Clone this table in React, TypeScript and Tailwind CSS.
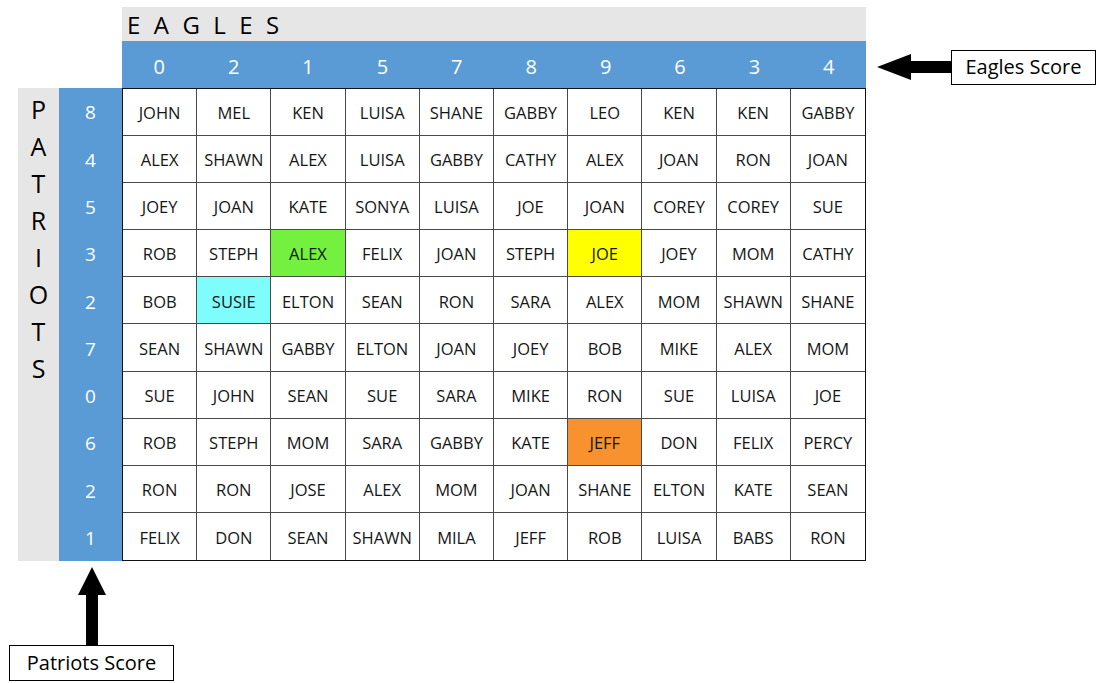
const eaglesScores = [0, 2, 1, 5, 7, 8, 9, 6, 3, 4];
const patriotsScores = [8, 4, 5, 3, 2, 7, 0, 6, 2, 1];

const names = [
  ['JOHN', 'MEL', 'KEN', 'LUISA', 'SHANE', 'GABBY', 'LEO', 'KEN', 'KEN', 'GABBY'],
  ['ALEX', 'SHAWN', 'ALEX', 'LUISA', 'GABBY', 'CATHY', 'ALEX', 'JOAN', 'RON', 'JOAN'],
  ['JOEY', 'JOAN', 'KATE', 'SONYA', 'LUISA', 'JOE', 'JOAN', 'COREY', 'COREY', 'SUE'],
  ['ROB', 'STEPH', 'ALEX', 'FELIX', 'JOAN', 'STEPH', 'JOE', 'JOEY', 'MOM', 'CATHY'],
  ['BOB', 'SUSIE', 'ELTON', 'SEAN', 'RON', 'SARA', 'ALEX', 'MOM', 'SHAWN', 'SHANE'],
  ['SEAN', 'SHAWN', 'GABBY', 'ELTON', 'JOAN', 'JOEY', 'BOB', 'MIKE', 'ALEX', 'MOM'],
  ['SUE', 'JOHN', 'SEAN', 'SUE', 'SARA', 'MIKE', 'RON', 'SUE', 'LUISA', 'JOE'],
  ['ROB', 'STEPH', 'MOM', 'SARA', 'GABBY', 'KATE', 'JEFF', 'DON', 'FELIX', 'PERCY'],
  ['RON', 'RON', 'JOSE', 'ALEX', 'MOM', 'JOAN', 'SHANE', 'ELTON', 'KATE', 'SEAN'],
  ['FELIX', 'DON', 'SEAN', 'SHAWN', 'MILA', 'JEFF', 'ROB', 'LUISA', 'BABS', 'RON'],
];

// highlighted squares, keyed "row-col"
const highlights: Record<string, string> = {
  '3-2': 'bg-[#74f03e]',
  '3-6': 'bg-[#ffff00]',
  '4-1': 'bg-[#7ffcfc]',
  '7-6': 'bg-[#f7922f]',
};

const font = { fontFamily: '"Open Sans", "Noto Sans", sans-serif' };

function LeftArrow() {
  return (
    <svg width="74" height="28" viewBox="0 0 74 28">
      <polygon points="0,14 34,1 34,8 74,8 74,20 34,20 34,27" fill="#000" />
    </svg>
  );
}

function UpArrow() {
  return (
    <svg width="30" height="78" viewBox="0 0 30 78">
      <polygon points="15,0 29,28 21,28 21,78 9,78 9,28 1,28" fill="#000" />
    </svg>
  );
}

export default function App() {
  return (
    <div className="h-[683px] w-[1101px] overflow-hidden bg-white pt-[7px] text-[#161616]" style={font}>
      {/* Eagles title bar */}
      <div className="ml-[122px] flex h-[34px] w-[744px] items-center bg-[#e6e6e6] pl-[5px] pt-[2px] text-[24px] leading-none tracking-[0.56em] text-black">
        EAGLES
      </div>

      {/* Eagles score row */}
      <div className="flex h-[47px] items-center">
        <div className="w-[122px]" />
        <div className="grid h-full w-[744px] grid-cols-10 bg-[#5b9bd5] pt-[4px] text-[20px] text-white">
          {eaglesScores.map((n, i) => (
            <div key={i} className="flex items-center justify-center">
              {n}
            </div>
          ))}
        </div>
        <div className="ml-[11px] mt-[5px] flex items-center">
          <LeftArrow />
          <div className="flex h-[35px] w-[145px] items-center justify-center border-[1.5px] border-black text-[20px] text-black">
            Eagles Score
          </div>
        </div>
      </div>

      {/* main board */}
      <div className="ml-[18px] flex h-[473px]">
        <div className="flex w-[41px] flex-col items-center bg-[#e6e6e6] pt-[3px] text-[25px] leading-[37px] text-black">
          {'PATRIOTS'.split('').map((c, i) => (
            <span key={i}>{c}</span>
          ))}
        </div>
        <div className="grid w-[63px] grid-rows-10 bg-[#5b9bd5] text-[19px] text-white">
          {patriotsScores.map((n, i) => (
            <div key={i} className="flex items-center justify-center pt-[2px]">
              {n}
            </div>
          ))}
        </div>
        <div className="grid w-[744px] grid-cols-10 grid-rows-10 border-[1.5px] border-[#111] text-[16.5px]">
          {names.map((row, r) =>
            row.map((name, c) => (
              <div
                key={`${r}-${c}`}
                className={`flex items-center justify-center border-[#4a4a4a] pt-[3px] ${c < 9 ? 'border-r' : ''} ${r < 9 ? 'border-b' : ''} ${highlights[`${r}-${c}`] ?? 'bg-white'}`}
              >
                {name}
              </div>
            )),
          )}
        </div>
      </div>

      {/* Patriots callout */}
      <div className="ml-[9px] mt-[6px] flex w-[165px] flex-col items-center">
        <UpArrow />
        <div className="flex h-[36px] w-[165px] items-center justify-center border-[1.5px] border-black text-[20px] text-black">
          Patriots Score
        </div>
      </div>
    </div>
  );
}
